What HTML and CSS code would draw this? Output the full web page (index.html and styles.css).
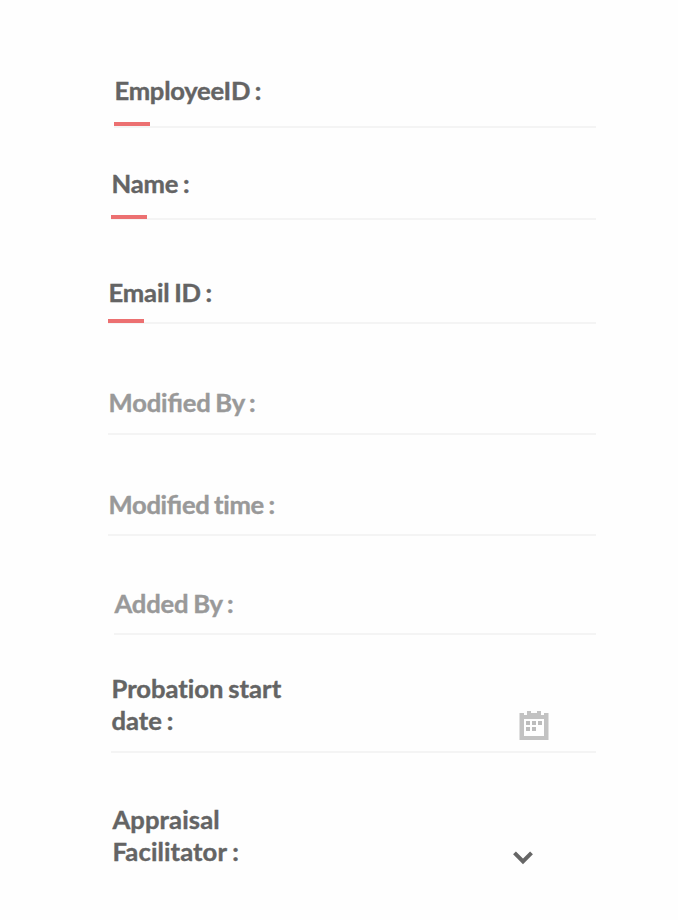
FILE: index.html
```
<!DOCTYPE html>
<html lang="en">
<head>
<meta charset="utf-8">
<title>Employee form</title>
<link rel="stylesheet" href="styles.css">
</head>
<body>
<form class="form">
  <div class="field required employee"><label>EmployeeID :</label></div>
  <div class="field required name"><label>Name :</label></div>
  <div class="field required email"><label>Email ID :</label></div>
  <div class="field muted modified-by"><label>Modified By :</label></div>
  <div class="field muted modified-time"><label>Modified t&zwnj;ime :</label></div>
  <div class="field muted added-by"><label>Added By :</label></div>
  <div class="field probation"><label>Probat&zwnj;ion start<br>date :</label>
    <svg class="calendar" viewBox="0 0 30 30" width="30" height="30"><path fill="#c2c2c2" fill-rule="evenodd" d="M0.5 3H8V1H12V3H18V1H22V3H29.5V30H0.5ZM5 9V26H25V9Z"/><path fill="#bcbcbc" d="M7 11h4v4H7zM13 11h4v4h-4zM19 11h4v4h-4zM7 17h4v4H7zM13 17h4v4h-4z"/><path fill="#fefefe" d="M5 3h3v2H5zM22 3h3v2h-3z"/></svg>
  </div>
  <div class="field appraisal"><label>Appraisal<br>Facilitator :</label>
    <svg class="chevron" viewBox="0 0 20 14" width="20" height="14"><path fill="none" stroke="#666" stroke-width="4" d="M1.5 1.8L10 10.3L18.5 1.8"/></svg>
  </div>
</form>
</body>
</html>
```
FILE: styles.css
```
* { box-sizing: border-box; }
body { margin: 0; background: #fefefe; font-family: Lato, sans-serif; }
.form { width: 678px; height: 920px; padding: 56px 82px 0 108px; overflow: hidden; }
.field { display: flex; align-items: flex-end; justify-content: space-between; border-bottom: 2px solid #f4f4f4; color: #646464; font-size: 25.6px; font-weight: 700; line-height: 32px; letter-spacing: -0.15px; word-spacing: -1.4px; font-feature-settings: "liga" 1; -webkit-text-stroke: 0.4px currentColor; }
.field label { padding-left: 0.5px; }
.muted { color: #999; }
.required { position: relative; }
.required::after { content: ""; position: absolute; left: 0; bottom: -1px; width: 36px; height: 4px; background: #ec7071; }
.employee { height: 72px; margin-left: 6px; padding-bottom: 20px; letter-spacing: -0.25px; }
.employee::after { bottom: 0; }
.name { height: 92px; margin-left: 3px; padding-bottom: 19px; }
.email { height: 104px; padding-bottom: 14px; }
.modified-by { height: 111px; padding-bottom: 15px; }
.modified-time { height: 101px; padding-bottom: 14px; letter-spacing: -0.3px; }
.added-by { height: 99px; margin-left: 6px; padding-bottom: 14px; }
.probation { height: 118px; margin-left: 3px; padding-bottom: 15px; letter-spacing: 0; }
.appraisal { height: 140px; margin-left: 4px; padding-bottom: 26px; border: 0; letter-spacing: 0.1px; word-spacing: -0.5px; }
.calendar { margin-right: 47px; margin-bottom: -4px; }
.chevron { margin-right: 63px; margin-bottom: 2px; }
```
